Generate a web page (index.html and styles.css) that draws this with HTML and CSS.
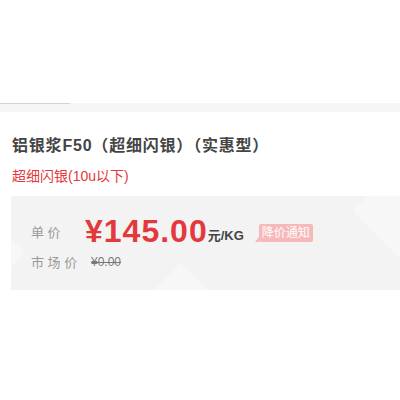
FILE: index.html
```html
<!DOCTYPE html>
<html lang="zh-CN">
<head>
    <meta charset="UTF-8">
    <title>铝银浆F50（超细闪银）（实惠型）</title>
    <link rel="stylesheet" href="styles.css">
</head>
<body>
    <div class="top-space"></div>
    <div class="tab-strip">
        <div class="tab-line"></div>
    </div>

    <div class="product">
        <h1 class="product-title">铝银浆F50（超细闪银）（实惠型）</h1>
        <div class="product-sub">超细闪银(10u以下)</div>

        <div class="price-box">
            <div class="deco deco-left"></div>
            <div class="deco deco-right"></div>
            <div class="deco deco-bottom"></div>
            <div class="price-row">
                <span class="label">单 价</span>
                <span class="price">¥145.00</span>
                <span class="unit">元/KG</span>
                <span class="notify">降价通知</span>
            </div>
            <div class="price-row market">
                <span class="label">市 场 价</span>
                <span class="old-price">¥0.00</span>
            </div>
        </div>
    </div>
</body>
</html>
```

FILE: styles.css
```css
body {
    margin: 0;
    background-color: #fff;
    font-family: "Liberation Sans", "Noto Sans CJK SC", sans-serif;
    color: #333;
}
.top-space {
    height: 103px;
}
.tab-strip {
    height: 9px;
    background-color: #f6f6f6;
}
.tab-line {
    width: 70px;
    height: 1px;
    background-color: #d4d4d4;
}
.product {
    padding-left: 11px;
}
.product-title {
    margin: 22px 0 0 1px;
    font-size: 16px;
    font-weight: bold;
    color: #444;
    line-height: 24px;
    letter-spacing: 0.8px;
}
.product-sub {
    margin: 9px 0 0 1px;
    font-size: 14px;
    color: #e4393c;
    line-height: 18px;
}
.price-box {
    position: relative;
    overflow: hidden;
    margin-top: 11px;
    height: 94px;
    padding: 18px 0 0 20px;
    box-sizing: border-box;
    background-color: #f3f3f3;
}
.deco {
    position: absolute;
    background-color: rgba(255, 255, 255, 0.35);
    transform: rotate(45deg);
}
.deco-left {
    left: -22px;
    top: 42px;
    width: 30px;
    height: 30px;
}
.deco-right {
    left: 360px;
    top: -30px;
    width: 90px;
    height: 90px;
}
.deco-bottom {
    left: 140px;
    top: 80px;
    width: 60px;
    height: 60px;
}
.price-row {
    position: relative;
    display: flex;
    align-items: center;
}
.label {
    width: 54px;
    font-size: 13px;
    color: #999;
}
.price {
    font-size: 32px;
    font-weight: bold;
    color: #e4393c;
    line-height: 34px;
    letter-spacing: 1px;
}
.unit {
    margin-top: 7px;
    font-size: 13px;
    font-weight: bold;
    color: #444;
}
.notify {
    position: relative;
    margin-left: 15px;
    margin-top: 4px;
    padding: 0 3px;
    font-size: 12px;
    line-height: 18px;
    color: #fff;
    background-color: #f6b8b8;
    border-radius: 2px;
}
.notify::before {
    content: "";
    position: absolute;
    left: -4px;
    bottom: 0;
    border-right: 4px solid #f6b8b8;
    border-top: 5px solid transparent;
}
.market {
    margin-top: 4px;
}
.market .label {
    width: 60px;
}
.old-price {
    font-size: 12px;
    color: #777;
    text-decoration: line-through;
}
```
